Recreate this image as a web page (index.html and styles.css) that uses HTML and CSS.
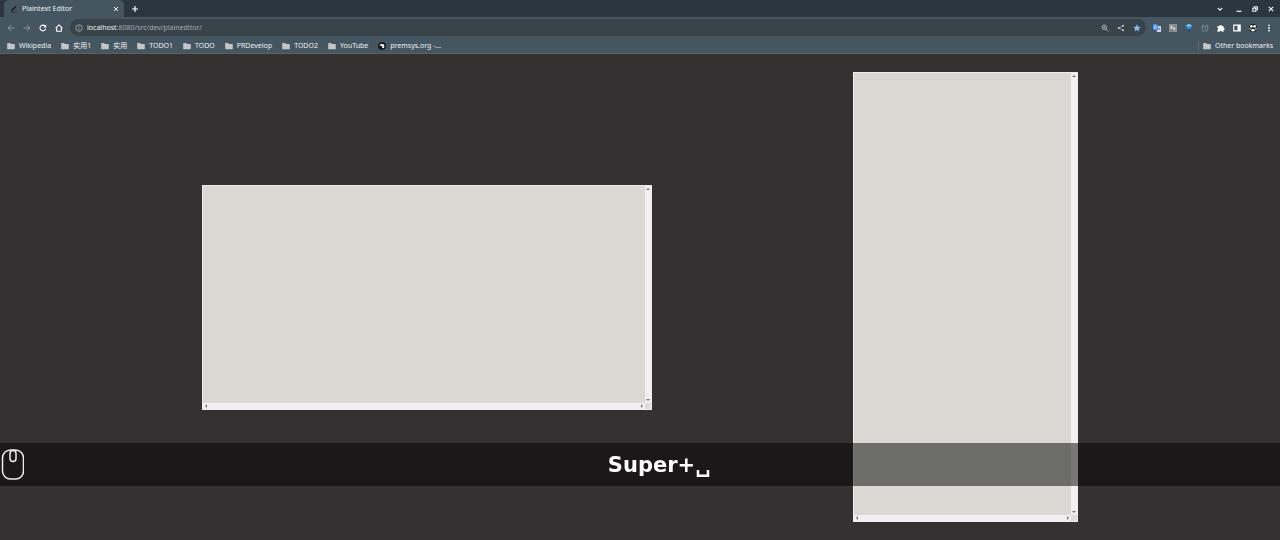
FILE: index.html
```
<!DOCTYPE html>
<html lang="en">
<head>
<meta charset="utf-8">
<title>Plaintext Editor</title>
<link rel="stylesheet" href="styles.css">
</head>
<body>
<svg class="defs" aria-hidden="true">
  <symbol id="folder" viewBox="0 0 8 8"><path d="M.2 1.6q0-.6.6-.6h2.3l.8.9h3.2q.7 0 .7.7v4.1q0 .6-.6.6H.8q-.6 0-.6-.6z" fill="#c3c6c8"/></symbol>
  <symbol id="up" viewBox="0 0 7 7"><path d="M1.2 4.7L3.5 2.3 5.8 4.7z" fill="#777"/></symbol>
  <symbol id="down" viewBox="0 0 7 7"><path d="M1.2 2.3L3.5 4.7 5.8 2.3z" fill="#777"/></symbol>
  <symbol id="left" viewBox="0 0 7 7"><path d="M4.7 1.2L2.3 3.5 4.7 5.8z" fill="#777"/></symbol>
  <symbol id="right" viewBox="0 0 7 7"><path d="M2.3 1.2L4.7 3.5 2.3 5.8z" fill="#777"/></symbol>
</svg>
<header class="browser">
  <div class="tabstrip">
    <div class="tab">
      <svg class="icon" viewBox="0 0 8 8"><path d="M1.2 6.2l.2-1.5L5.3.8l1.2 1.2-3.9 3.9zM1.2 6.7h5.6v.9H1.2z" fill="#17232b"/></svg>
      <span class="tab-title">Plaintext Editor</span>
      <button class="btn" aria-label="Close tab"><svg class="icon" viewBox="0 0 8 8"><path d="M2 2l4 4M6 2L2 6" stroke="#e8edf0" stroke-width="1"/></svg></button>
    </div>
    <button class="btn new-tab" aria-label="New tab"><svg class="icon" viewBox="0 0 8 8"><path d="M4 1v6M1 4h6" stroke="#fff" stroke-width="1.2"/></svg></button>
    <div class="window-buttons">
      <button class="btn tab-search" aria-label="Search tabs"><svg class="icon" viewBox="0 0 8 8"><path d="M1.8 3L4 5.2 6.2 3" fill="none" stroke="#e8edf0" stroke-width="1.1"/></svg></button>
      <button class="btn" aria-label="Minimize"><svg class="icon" viewBox="0 0 8 8"><path d="M1.5 6.3h5" stroke="#f0f3f5" stroke-width="1.2"/></svg></button>
      <button class="btn" aria-label="Restore"><svg class="icon" viewBox="0 0 8 8"><path d="M3.2 3V1.8h3.2v3H5M1.8 3.3h3v3h-3z" fill="none" stroke="#f0f3f5" stroke-width="1.1"/></svg></button>
      <button class="btn" aria-label="Close"><svg class="icon" viewBox="0 0 8 8"><path d="M1.8 1.8l4.4 4.4M6.2 1.8L1.8 6.2" stroke="#f0f3f5" stroke-width="1.2"/></svg></button>
    </div>
  </div>
  <div class="toolbar">
    <nav class="nav">
      <button class="btn" aria-label="Back"><svg class="icon" viewBox="0 0 8 8"><path d="M7.3 4H1.2M4 1L1 4l3 3" fill="none" stroke="#8a979f"/></svg></button>
      <button class="btn" aria-label="Forward"><svg class="icon" viewBox="0 0 8 8"><path d="M.7 4h6.1M4 1l3 3-3 3" fill="none" stroke="#8a979f"/></svg></button>
      <button class="btn" aria-label="Reload"><svg class="icon" viewBox="0 0 8 8"><path d="M6.7 4.7A2.9 2.9 0 1 1 6 2" fill="none" stroke="#fff" stroke-width="1.1"/><path d="M7.2.6v3H4.3z" fill="#fff"/></svg></button>
      <button class="btn" aria-label="Home"><svg class="icon" viewBox="0 0 8 8"><path d="M.6 4.1L4 .9l3.4 3.2M1.7 3.5v3.7h4.6V3.5" fill="none" stroke="#fff" stroke-width="1.1"/></svg></button>
    </nav>
    <div class="address">
      <svg class="icon" viewBox="0 0 8 8"><circle cx="4" cy="4" r="3.2" fill="none" stroke="#a9b1b6" stroke-width=".8"/><path d="M4 3.5v2.3M4 2v.8" stroke="#a9b1b6" stroke-width=".8"/></svg>
      <a class="url" href="#"><span class="host">localhost</span>:8080/src/dev/plaineditor/</a>
      <div class="address-actions">
        <button class="btn" aria-label="Zoom"><svg class="icon" viewBox="0 0 8 8"><circle cx="3.3" cy="3.3" r="2.3" fill="none" stroke="#bcc3c8" stroke-width=".8"/><path d="M5 5l2.4 2.4M2.2 3.3h2.2M3.3 2.2v2.2" stroke="#bcc3c8" stroke-width=".8"/></svg></button>
        <button class="btn" aria-label="Share"><svg class="icon" viewBox="0 0 8 8"><path d="M6.1 1.7L1.9 4l4.2 2.3" fill="none" stroke="#bcc3c8" stroke-width=".7"/><g fill="#c4cbcf"><circle cx="6.1" cy="1.7" r="1"/><circle cx="1.8" cy="4" r="1"/><circle cx="6.1" cy="6.3" r="1"/></g></svg></button>
        <button class="btn" aria-label="Bookmark"><svg class="icon" viewBox="0 0 8 8"><path d="M4 .3l1.1 2.4 2.7.3-2 1.8.6 2.7L4 6.1 1.6 7.5l.6-2.7-2-1.8 2.7-.3z" fill="#8ab8f5"/></svg></button>
      </div>
    </div>
    <div class="extensions">
      <button class="btn" aria-label="Translate"><svg class="icon" viewBox="0 0 8 8"><path d="M3 2h5v6H4z" fill="#d5dae0"/><path d="M0 0h4.2l1.6 6H0z" fill="#4687ee"/><path d="M3.6 2.4a1.4 1.4 0 1 0 .1 1.3H2.5" fill="none" stroke="#fff" stroke-width=".7"/><path d="M5.2 3.9h2.3M6.6 3.9q-.1 1.4-1 2.2M5.6 4.8l1.5 1.6" fill="none" stroke="#5b7da9" stroke-width=".5"/></svg></button>
      <button class="btn" aria-label="Reader"><svg class="icon" viewBox="0 0 8 8"><path d="M0 0h8v8H0z" fill="#8e9498"/><path d="M1.5 2h2v1.5h2.7V6H4.5V4.8h-3z" fill="#c9cccd"/><path d="M1.5 6.5h3M5 2h1.7" stroke="#555c61" stroke-width=".7"/></svg></button>
      <button class="btn" aria-label="Pin"><svg class="icon" viewBox="0 0 8 8"><path d="M.9 1.2h6.2L6.9 3 4.9 5.2H3.1L1.1 3z" fill="#2a9ae6"/><path d="M2.2.5h3.6v1.4H2.2z" fill="#c6e9fa"/><path d="M3.3 5.2h1.4L4.3 8h-.6z" fill="#163e61"/></svg></button>
      <button class="btn" aria-label="Alarm"><svg class="icon" viewBox="0 0 8 8"><path d="M1.3 2h5.4v4q0 1-1 1H2.3q-1 0-1-1zM.5 2.1L2 .7M7.5 2.1L6 .7M4 3v1.8h1.3" fill="none" stroke="#87949c" stroke-width=".8"/></svg></button>
      <button class="btn" aria-label="Extensions"><svg class="icon" viewBox="0 0 8 8"><path d="M.5 2h2a1.1 1.1 0 0 1 2.2 0h1.8v1.8a1.1 1.1 0 0 1 0 2.2v1.8H4.8a1.1 1.1 0 0 0-2.2 0H.5V5.7a1.1 1.1 0 0 0 0-2z" fill="#fff"/></svg></button>
      <button class="btn" aria-label="Side panel"><svg class="icon" viewBox="0 0 8 8"><path d="M.2.6h7.6v6.8H.2zM1.3 1.7v4.6h3.2V1.7z" fill="#fff" fill-rule="evenodd"/></svg></button>
      <button class="btn" aria-label="Profile"><svg class="icon" viewBox="0 0 8 8"><circle cx="4" cy="4" r="4" fill="#11191e"/><g fill="#f4f5f5"><circle cx="2.4" cy="2.4" r="1.4"/><circle cx="5.6" cy="2.4" r="1.4"/><path d="M2.8 5h2.4l.8 1.7q-2 1.4-4 0zM.2 4.1l1.5.5-.2 1.6Q.3 5.4.2 4.1zM7.8 4.1l-1.5.5.2 1.6q1.2-.8 1.3-2.1z"/></g></svg></button>
      <button class="btn" aria-label="Menu"><svg class="icon" viewBox="0 0 8 8"><g fill="#fff"><circle cx="4" cy="1.3" r=".9"/><circle cx="4" cy="4" r=".9"/><circle cx="4" cy="6.7" r=".9"/></g></svg></button>
    </div>
  </div>
  <nav class="bookmarks" aria-label="Bookmarks">
    <a class="bookmark" href="#"><svg class="icon"><use href="#folder"/></svg>Wikipedia</a>
    <a class="bookmark" href="#"><svg class="icon"><use href="#folder"/></svg>实用1</a>
    <a class="bookmark" href="#"><svg class="icon"><use href="#folder"/></svg>实用</a>
    <a class="bookmark" href="#"><svg class="icon"><use href="#folder"/></svg>TODO1</a>
    <a class="bookmark" href="#"><svg class="icon"><use href="#folder"/></svg>TODO</a>
    <a class="bookmark" href="#"><svg class="icon"><use href="#folder"/></svg>PRDevelop</a>
    <a class="bookmark" href="#"><svg class="icon"><use href="#folder"/></svg>TODO2</a>
    <a class="bookmark" href="#"><svg class="icon"><use href="#folder"/></svg>YouTube</a>
    <a class="bookmark" href="#"><svg class="icon" viewBox="0 0 8 8"><circle cx="4" cy="4" r="4" fill="#1a1c20"/><path d="M1.7 3.4Q2 1.8 4 2q2.5.1 2.4 2.3L5.8 6.2 4.2 5.7l.1-1.6z" fill="#fff"/></svg>premsys.org -…</a>
    <a class="bookmark other" href="#"><svg class="icon"><use href="#folder"/></svg>Other bookmarks</a>
  </nav>
</header>
<main class="page">
  <div class="editor wide">
    <textarea class="text" aria-label="Wide editor"></textarea>
    <div class="bar vertical"><svg class="arrow"><use href="#up"/></svg><svg class="arrow"><use href="#down"/></svg></div>
    <div class="bar"><svg class="arrow"><use href="#left"/></svg><svg class="arrow"><use href="#right"/></svg></div>
    <div class="corner"></div>
  </div>
  <div class="editor tall">
    <textarea class="text" aria-label="Tall editor"></textarea>
    <div class="bar vertical"><svg class="arrow"><use href="#up"/></svg><svg class="arrow"><use href="#down"/></svg></div>
    <div class="bar"><svg class="arrow"><use href="#left"/></svg><svg class="arrow"><use href="#right"/></svg></div>
    <div class="corner"></div>
  </div>
</main>
<div class="keys">
  <svg class="mouse" viewBox="0 0 24 32"><rect x="2.5" y="1" width="21" height="29" rx="8" fill="none" stroke="#eee" stroke-width="1.5"/><rect x="10" y="1.5" width="6" height="11" rx="3" fill="none" stroke="#eee" stroke-width="1.5"/></svg>
  <div class="combo">Super+␣</div>
</div>
</body>
</html>
```
FILE: styles.css
```
* { box-sizing: border-box; }
body {
  margin: 0;
  min-height: 100vh;
  display: flex;
  flex-direction: column;
  background: #343133;
  font-family: "Noto Sans", "Noto Sans CJK SC", sans-serif;
  font-size: 7px;
  line-height: 10px;
  color: #edf1f3;
}
.defs { position: absolute; width: 0; height: 0; }
.icon { display: block; flex: none; width: 8px; height: 8px; }
.btn { display: block; flex: none; padding: 0; border: 0; background: none; }
.browser { background: #455660; border-bottom: 1px solid #596366; }
.tabstrip {
  display: flex;
  align-items: center;
  height: 17px;
  padding: 0 5px 0 4px;
  background: #2b363e;
}
.tab {
  display: flex;
  align-items: center;
  gap: 4px;
  width: 120px;
  height: 17px;
  padding: 0 4px 0 6px;
  border-radius: 5px 5px 0 0;
  background: #455660;
}
.tab-title { flex: 1; }
.new-tab { margin-left: 7px; }
.window-buttons { display: flex; gap: 8px; margin-left: auto; }
.tab-search { margin-right: 3px; }
.toolbar {
  display: flex;
  align-items: center;
  height: 21px;
  padding: 0 7px;
  gap: 7px;
}
.nav { display: flex; gap: 8px; }
.address {
  flex: 1;
  display: flex;
  align-items: center;
  gap: 4px;
  height: 17px;
  padding: 0 5px;
  border-radius: 9px;
  background: #39434a;
}
.url { color: #a4adb2; text-decoration: none; }
.host { color: #f1f3f4; }
.address-actions { display: flex; gap: 8px; margin-left: auto; }
.extensions { display: flex; gap: 8px; }
.bookmarks {
  display: flex;
  align-items: center;
  gap: 10px;
  height: 15px;
  padding: 0 7px;
}
.bookmark {
  display: flex;
  align-items: center;
  gap: 4px;
  color: inherit;
  text-decoration: none;
  white-space: nowrap;
}
.other { margin-left: auto; padding-left: 4px; border-left: 1px solid #5d6c75; }
.page {
  flex: 1;
  display: flex;
  align-items: center;
  justify-content: space-evenly;
}
.editor {
  display: grid;
  grid-template: 1fr 6px / 1fr 6px;
  border: 1px solid #eeedeb;
  background: #d9d8d3;
}
.wide { width: 450px; height: 225px; }
.tall { width: 225px; height: 450px; }
.text {
  width: 100%;
  height: 100%;
  padding: 0;
  border: 0;
  outline: 0;
  resize: none;
  overflow: hidden;
  background: #d9d8d3;
}
.bar { display: flex; justify-content: space-between; background: #f0eff1; }
.vertical { flex-direction: column; }
.arrow { display: block; width: 6px; height: 6px; }
.corner { background: #dcdcdc; }
.keys {
  position: fixed;
  left: 0;
  right: 0;
  bottom: 54px;
  display: flex;
  align-items: center;
  gap: 14px;
  height: 43px;
  background: rgba(0, 0, 0, 0.5);
}
.mouse { flex: none; width: 24px; height: 32px; }
.combo {
  flex: 1;
  text-align: center;
  font: bold 21px/28px "DejaVu Sans", sans-serif;
  color: #fff;
}
```
